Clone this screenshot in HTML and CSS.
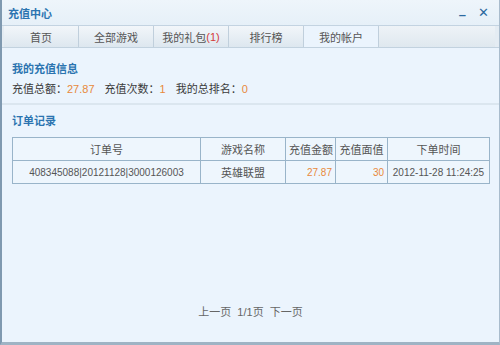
FILE: index.html
```html
<!DOCTYPE html>
<html>
<head>
<meta charset="utf-8">
<link rel="stylesheet" href="styles.css">
</head>
<body>
<div class="win">
  <div class="titlebar">
    <span class="title">充值中心</span>
    <span class="ctrls"><span class="min">–</span><span class="close">✕</span></span>
  </div>
  <div class="tabs">
    <div class="tab">首页</div>
    <div class="tab">全部游戏</div>
    <div class="tab">我的礼包<span class="red">(1)</span></div>
    <div class="tab">排行榜</div>
    <div class="tab active">我的帐户</div>
    <div class="tab-rest"></div>
  </div>
  <div class="section info">
    <div class="heading">我的充值信息</div>
    <div class="stats">
      <span>充值总额：<em>27.87</em></span>
      <span>充值次数：<em>1</em></span>
      <span>我的总排名：<em>0</em></span>
    </div>
  </div>
  <div class="section orders">
    <div class="heading">订单记录</div>
    <table class="tbl">
      <tr>
        <th class="c1">订单号</th>
        <th class="c2">游戏名称</th>
        <th class="c3">充值金额</th>
        <th class="c4">充值面值</th>
        <th class="c5">下单时间</th>
      </tr>
      <tr>
        <td class="center digits">408345088|20121128|3000126003</td>
        <td class="center">英雄联盟</td>
        <td class="num digits">27.87</td>
        <td class="num digits">30</td>
        <td class="center digits">2012-11-28 11:24:25</td>
      </tr>
    </table>
    <div class="pager">上一页 &nbsp;1/1页 &nbsp;下一页</div>
  </div>
</div>
</body>
</html>
```
FILE: styles.css
```css
* { box-sizing: border-box; }
html, body { margin: 0; padding: 0; }
body {
  width: 500px; height: 345px;
  font-family: "Liberation Sans", "Noto Sans CJK SC", sans-serif;
  font-size: 11px;
  color: #3a3a3a;
  background: #e6eef5;
}
.win {
  width: 500px; height: 345px;
  border-left: 2px solid #7f99b0;
  border-right: 1px solid #a9bccd;
  border-bottom: 3px solid #9fb3c4;
  background: #ebf4fd;
  display: flex; flex-direction: column;
}
.titlebar {
  height: 25px;
  display: flex; align-items: center; justify-content: space-between;
  padding: 0 10px 0 6px;
  background: linear-gradient(#eef5fb, #e6f0f8);
}
.title { font-weight: bold; color: #2c74b0; font-size: 11px; }
.ctrls { display: flex; gap: 12px; color: #2c6aa0; font-size: 14px; align-items: center; }
.min { font-weight: bold; font-size: 13px; position: relative; top: 2px; }
.close { font-size: 13px; }
.tabs {
  height: 23px;
  display: flex;
  padding-left: 2px;
  padding-right: 4px;
  border-top: 1px solid #c3d3e1;
  border-bottom: 1px solid #c2d2df;
  background: #e4ecf3;
}
.tab {
  width: 75px;
  display: flex; align-items: center; justify-content: center;
  background: linear-gradient(#f2f6fa, #dde7ef);
  border-right: 1px solid #c0cfdc;
  color: #555;
}
.tab.active { background: #ebf4fd; }
.tab-rest { flex: 1; background: linear-gradient(#eef3f7, #dfe8ef); }
.red { color: #d43a3a; }
.section { padding: 0 10px; }
.info { padding-top: 13px; padding-bottom: 6px; border-bottom: 2px solid #dbe6ef; }
.heading { font-weight: bold; color: #2c74b0; height: 16px; line-height: 16px; }
.stats { margin-top: 2px; display: flex; gap: 10px; height: 18px; align-items: center; }
.stats em { font-style: normal; color: #e8893b; }
.orders { padding-top: 8px; flex: 1; display: flex; flex-direction: column; }
.tbl {
  margin-top: 8px;
  width: 477px;
  border-collapse: collapse;
  table-layout: fixed;
  background: #eef6fd;
}
.tbl th, .tbl td {
  border: 1px solid #99b4c9;
  font-weight: normal;
  padding: 0 3px;
  color: #555;
  height: 23px;
  white-space: nowrap;
  overflow: hidden;
}
.tbl th { text-align: center; }
.digits { font-size: 10px; }
.c1 { width: 188px; }
.c2 { width: 85px; }
.c3 { width: 50px; }
.c4 { width: 52px; }
.c5 { width: 102px; }
.center { text-align: center; }
.num { text-align: right; color: #e8893b !important; }
.pager {
  margin-top: auto;
  margin-bottom: 23px;
  text-align: center;
  color: #666;
}
```
